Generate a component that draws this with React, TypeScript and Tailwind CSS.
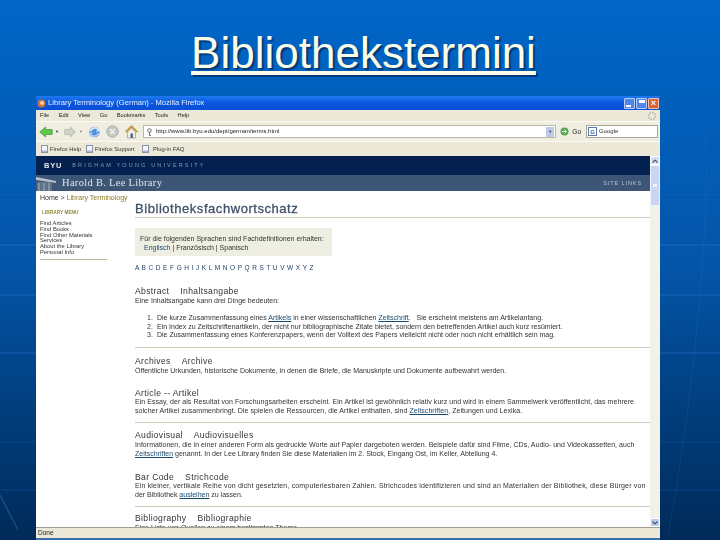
const Back = () => (
  <svg width="14" height="12" viewBox="0 0 17 14">
    <path d="M1 7 L8 1 V4 H16 V10 H8 V13 Z" fill="#5fc94a" stroke="#2f8f2a" strokeWidth="0.8" />
  </svg>
);
const Forward = () => (
  <svg width="12" height="12" viewBox="0 0 17 14" preserveAspectRatio="none">
    <path d="M16 7 L9 1 V4 H1 V10 H9 V13 Z" fill="#cfd2c8" stroke="#a8aba0" strokeWidth="0.8" />
  </svg>
);
const Reload = () => (
  <svg width="13" height="14" viewBox="0 0 15 15">
    <circle cx="7.5" cy="7.5" r="6" fill="#4f8fdc" />
    <path d="M2 6 A6 6 0 0 1 12 3.5 L13.5 2 V7 H9 L10.8 5 A4 4 0 0 0 4 7 Z" fill="#d7e8f8" />
    <path d="M13 9 A6 6 0 0 1 3 11.5 L1.5 13 V8 H6 L4.2 10 A4 4 0 0 0 11 8 Z" fill="#a9cdf0" />
  </svg>
);
const Stop = () => (
  <svg width="13" height="13" viewBox="0 0 14 14">
    <circle cx="7" cy="7" r="6.2" fill="#c4c6c0" stroke="#aeb0aa" />
    <path d="M4.5 4.5 L9.5 9.5 M9.5 4.5 L4.5 9.5" stroke="#eeeeea" strokeWidth="1.8" />
  </svg>
);
const HomeIcon = () => (
  <svg width="15" height="15" viewBox="0 0 15 15">
    <path d="M1 7.5 L7.5 1 L14 7.5 L12.5 8.5 L7.5 3.8 L2.5 8.5 Z" fill="#c7933c" />
    <path d="M3.5 8 L7.5 4.2 L11.5 8 V14 H3.5 Z" fill="#f3efe0" stroke="#8a8a80" strokeWidth="0.6" />
    <rect x="6.5" y="9.5" width="2.5" height="4.5" fill="#4d6b8f" />
  </svg>
);
const PageIcon = () => (
  <svg width="7" height="8" viewBox="0 0 7 8">
    <rect x="0.5" y="0.5" width="6" height="7" fill="#f4f6fa" stroke="#8c93a8" />
    <rect x="1" y="5.5" width="5" height="1.5" fill="#a9b6d4" />
  </svg>
);

function Term({ a, b, sep = "\u00a0\u00a0\u00a0\u00a0" }: { a: string; b: string; sep?: string }) {
  return (
    <div className="text-[8.6px] leading-[10px] tracking-[0.35px] text-[#333]">
      {a}
      {sep}
      {b}
    </div>
  );
}
const Rule = () => <div className="h-px bg-[#cfcdb8]" />;
const Lnk = ({ children }: { children: React.ReactNode }) => (
  <span className="underline text-[#1a4a6e]">{children}</span>
);

export default function App() {
  return (
    <div className="relative w-[720px] h-[540px] overflow-hidden bg-gradient-to-b from-[#0066c8] via-[#0455a8] to-[#002a58] font-['Liberation_Sans',Arial,sans-serif]">
      <svg className="absolute inset-0" width="720" height="540" viewBox="0 0 720 540">
        <g stroke="#2a78cc" strokeWidth="1.2" opacity="0.55">
          <path d="M0 195 H720" opacity="0.5" />
          <path d="M0 245 H720" />
          <path d="M0 295 H720" />
          <path d="M0 353 H720" />
          <path d="M0 442 H720" opacity="0.4" />
          <path d="M0 490 H720" opacity="0.5" />
        </g>
        <path d="M0 495 L18 530" stroke="#2a6aa8" strokeWidth="1.5" opacity="0.5" />
        <path d="M705 130 C 712 220 690 420 668 535" stroke="#3a82cf" strokeWidth="1" fill="none" opacity="0.18" />
      </svg>

      <div className="relative h-[96px] pt-[27px] pl-[7px] text-center">
        <span className="text-[44px] leading-[52px] text-[#fbfde8] underline decoration-[4px] underline-offset-[3px] [text-shadow:2px_2px_1px_#003a78]">
          Bibliothekstermini
        </span>
      </div>

      <div className="relative mx-[36px] w-[624px] h-[444px] flex flex-col overflow-hidden bg-white blur-[0.3px]">
        {/* title bar */}
        <div className="h-[14px] shrink-0 flex items-center bg-gradient-to-b from-[#1f7af0] via-[#0a56dc] to-[#0a4fd6] pl-[1px] pr-[1px]">
          <svg width="9" height="9" viewBox="0 0 8 8" className="mr-[2px]">
            <circle cx="4" cy="4" r="3.6" fill="#c8743a" />
            <circle cx="4.5" cy="3.6" r="1.8" fill="#e8d8b8" />
          </svg>
          <span className="text-[7.6px] leading-none text-[#e8f0ff] whitespace-nowrap">Library Terminology (German) - Mozilla Firefox</span>
          <div className="ml-auto flex gap-[1px]">
            <div className="w-[11px] h-[11px] rounded-[1px] bg-[#4f86ea] border border-[#b8d0f8] flex items-end pl-[1px] pb-[1px]">
              <div className="w-[5px] h-[2px] bg-white" />
            </div>
            <div className="w-[11px] h-[11px] rounded-[1px] bg-[#4f86ea] border border-[#b8d0f8] flex justify-center pt-[1px]">
              <div className="w-[6px] h-[3px] bg-white" />
            </div>
            <div className="w-[11px] h-[11px] rounded-[1px] bg-[#d8623c] border border-[#f0c0a8] flex items-center justify-center text-[9px] font-bold leading-none text-white">
              ×
            </div>
          </div>
        </div>
        {/* menu */}
        <div className="h-[12px] shrink-0 flex items-center gap-[9.5px] pl-[4px] pr-[3px] bg-[#ece9d8] border-b border-[#fbfaf3] text-[5.7px] text-[#222]">
          <span>File</span>
          <span>Edit</span>
          <span>View</span>
          <span>Go</span>
          <span>Bookmarks</span>
          <span>Tools</span>
          <span>Help</span>
          <svg className="ml-auto" width="10" height="10" viewBox="0 0 10 10">
            <circle cx="5" cy="5" r="3.4" fill="none" stroke="#b8b6a8" strokeWidth="1.6" strokeDasharray="1.6 1" />
          </svg>
        </div>
        {/* nav */}
        <div className="h-[20px] shrink-0 flex items-center pl-[3px] pr-[2px] bg-[#f0eee0] border-b border-[#fbfaf3]">
          <Back />
          <span className="text-[4px] ml-[2px] w-[9px] text-[#333]">▼</span>
          <Forward />
          <span className="text-[4px] ml-[3px] w-[9px] text-[#888]">▼</span>
          <Reload />
          <span className="w-[5px]" />
          <Stop />
          <span className="w-[5px]" />
          <HomeIcon />
          <span className="w-[4px]" />
          <div className="flex-1 h-[13px] bg-white border border-[#b8b8a8] flex items-center pr-[1px] min-w-0">
            <svg className="ml-[3px] shrink-0" width="5" height="8" viewBox="0 0 5 8">
              <circle cx="2.5" cy="2.5" r="1.8" fill="none" stroke="#667" />
              <path d="M2.5 4 V7.5 H4" stroke="#667" fill="none" />
            </svg>
            <span className="pl-[4px] text-[6px] text-[#222] whitespace-nowrap">http://www.lib.byu.edu/dept/german/terms.html</span>
            <div className="ml-auto w-[8px] h-[10px] bg-[#bccbe8] flex items-center justify-center text-[4px] text-[#335]">▼</div>
          </div>
          <svg className="ml-[4px]" width="9" height="9" viewBox="0 0 9 9">
            <circle cx="4.5" cy="4.5" r="4" fill="#58a858" />
            <path d="M2 4.5 H6 M4.5 2.8 L6.5 4.5 L4.5 6.2" stroke="#d8f0d8" fill="none" />
          </svg>
          <span className="ml-[3px] text-[6.5px] text-[#222]">Go</span>
          <div className="ml-[5px] w-[72px] h-[13px] bg-white border border-[#a8a898] flex items-center pl-[1px]">
            <div className="w-[9px] h-[9px] border border-[#5a7aa8] text-[6px] leading-[8px] text-center text-[#355a90] font-bold mr-[2px]">G</div>
            <span className="text-[6px] text-[#333] whitespace-nowrap">Google</span>
          </div>
        </div>
        {/* bookmarks */}
        <div className="h-[14px] shrink-0 flex items-center pl-[5px] bg-[#ece9d8] text-[5.8px] text-[#333] whitespace-nowrap">
          <span className="flex items-center gap-[2px] w-[45px]"><PageIcon />Firefox Help</span>
          <span className="flex items-center gap-[2px] w-[56px]"><PageIcon />Firefox Support</span>
          <span className="flex items-center gap-[4px]"><PageIcon />Plug-in FAQ</span>
        </div>

        <div className="flex-1 flex min-h-0">
          <div className="flex-1 min-w-0 flex flex-col">
            {/* BYU bar */}
            <div className="h-[19px] shrink-0 bg-[#03204f] flex items-center pl-[8px] gap-[10px]">
              <span className="text-[7.5px] font-bold tracking-[0.8px] text-[#dfe5ef]">BYU</span>
              <span className="text-[5.5px] tracking-[2.15px] text-[#8a98b0]">BRIGHAM YOUNG UNIVERSITY</span>
            </div>
            {/* Library bar */}
            <div className="h-[16px] shrink-0 bg-[#3d5675] flex items-center">
              <svg width="20" height="16" viewBox="0 0 20 16">
                <path d="M0 2 L20 6 V8 L0 5 Z" fill="#b8bfc8" />
                <rect x="1" y="7" width="15" height="9" fill="#5f7388" />
                <path d="M3 8 V16 M8 8 V16 M13 8 V16" stroke="#a8b2bc" />
              </svg>
              <span className="ml-[6px] font-['Liberation_Serif',serif] text-[10.5px] tracking-[0.3px] text-[#e0e6ee]">Harold B. Lee Library</span>
              <span className="ml-auto mr-[8px] text-[5.5px] tracking-[0.9px] text-[#b8c4d4]">SITE LINKS</span>
            </div>
            {/* page */}
            <div className="relative flex-1 min-h-0 flex bg-white overflow-hidden">
              <div className="w-[99px] shrink-0 pl-[4px]">
                <div className="pt-[2px] text-[7px] leading-[9px] whitespace-nowrap text-[#333]">
                  Home &gt; <span className="text-[#8a7a20]">Library Terminology</span>
                </div>
                <div className="mt-[7px] pl-[2px] text-[4.8px] leading-[7px] font-bold text-[#8d8a3a]">LIBRARY MENU</div>
                <div className="mt-[5px] text-[5.8px] leading-[5.8px] text-[#333] whitespace-nowrap">
                  <div>Find Articles</div>
                  <div>Find Books</div>
                  <div>Find Other Materials</div>
                  <div>Services</div>
                  <div>About the Library</div>
                  <div>Personal Info</div>
                </div>
                <div className="mt-[3px] mr-[28px] h-px bg-[#b9b79c]" />
              </div>

              <div className="flex-1 min-w-0">
                <div className="pt-[10px] pb-[1px] text-[13px] leading-[15px] tracking-[0.55px] text-[#3f5168] [-webkit-text-stroke:0.3px_#3f5168]">
                  Bibliotheksfachwortschatz
                </div>
                <Rule />
                <div className="mt-[10px] w-[197px] h-[28px] bg-[#eeeee3] pl-[5px] pt-[6px] text-[7px] leading-[9px] text-[#333] whitespace-nowrap">
                  <div>Für die folgenden Sprachen sind Fachdefinitionen erhalten:</div>
                  <div className="pl-[4px]"><span className="text-[#1a4a6e]">Englisch</span> | Französisch | Spanisch</div>
                </div>
                <div className="mt-[8px] text-[6.5px] leading-[8px] tracking-[0.4px] text-[#1f3f66] whitespace-nowrap">A B C D E F G H I J K L M N O P Q R S T U V W X Y Z</div>

                <div className="mt-[14px]">
                  <Term a="Abstract" b="Inhaltsangabe" />
                  <div className="text-[7px] leading-[9px] text-[#333] whitespace-nowrap">Eine Inhaltsangabe kann drei Dinge bedeuten:</div>
                  <div className="mt-[9px] text-[7px] leading-[8.7px] text-[#333] whitespace-nowrap">
                    <div className="flex"><span className="w-[22px] pl-[12px]">1.</span><span>Die kurze Zusammenfassung eines <Lnk>Artikels</Lnk> in einer wissenschaftlichen <Lnk>Zeitschrift</Lnk>.{"\u00a0\u00a0\u00a0"}Sie erscheint meistens am Artikelanfang.</span></div>
                    <div className="flex"><span className="w-[22px] pl-[12px]">2.</span><span>Ein Index zu Zeitschriftenartikeln, der nicht nur bibliographische Zitate bietet, sondern den betreffenden Artikel auch kurz resümiert.</span></div>
                    <div className="flex"><span className="w-[22px] pl-[12px]">3.</span><span>Die Zusammenfassung eines Konferenzpapers, wenn der Volltext des Papers vielleicht nicht oder noch nicht erhältlich sein mag.</span></div>
                  </div>
                </div>
                <div className="mt-[7px]"><Rule /></div>

                <div className="mt-[8px]">
                  <Term a="Archives" b="Archive" />
                  <div className="text-[7px] leading-[9px] text-[#333] whitespace-nowrap">Öffentliche Urkunden, historische Dokumente, in denen die Briefe, die Manuskripte und Dokumente aufbewahrt werden.</div>
                </div>

                <div className="mt-[13px]">
                  <Term a="Article" b="Artikel" sep=" -- " />
                  <div className="-mt-[1px] text-[7px] leading-[9px] tracking-[0.05px] text-[#333] whitespace-nowrap">Ein Essay, der als Resultat von Forschungsarbeiten erscheint. Ein Artikel ist gewöhnlich relativ kurz und wird in einem Sammelwerk veröffentlicht, das mehrere</div>
                  <div className="text-[7px] leading-[9px] tracking-[0.05px] text-[#333] whitespace-nowrap">solcher Artikel zusammenbringt. Die spielen die Ressourcen, die Artikel enthalten, sind <Lnk>Zeitschriften</Lnk>, Zeitungen und Lexika.</div>
                </div>
                <div className="mt-[7px]"><Rule /></div>

                <div className="mt-[7px]">
                  <Term a="Audiovisual" b="Audiovisuelles" />
                  <div className="mt-[1px] text-[7px] leading-[8.5px] tracking-[0.03px] text-[#333] whitespace-nowrap">Informationen, die in einer anderen Form als gedruckte Worte auf Papier dargeboten werden. Beispiele dafür sind Filme, CDs, Audio- und Videokassetten, auch</div>
                  <div className="text-[7px] leading-[8.5px] text-[#333] whitespace-nowrap"><Lnk>Zeitschriften</Lnk> genannt. In der Lee Library finden Sie diese Materialien im 2. Stock, Eingang Ost, im Keller, Abteilung 4.</div>
                </div>

                <div className="mt-[14px]">
                  <Term a="Bar Code" b="Strichcode" />
                  <div className="-mt-[1px] text-[7px] leading-[9px] tracking-[0.16px] text-[#333] whitespace-nowrap">Ein kleiner, vertikale Reihe von dicht gesetzten, computerlesbaren Zahlen. Strichcodes identifizieren und sind an Materialien der Bibliothek, diese Bürger von</div>
                  <div className="text-[7px] leading-[9px] text-[#333] whitespace-nowrap">der Bibliothek <Lnk>ausleihen</Lnk> zu lassen.</div>
                </div>
                <div className="mt-[7px]"><Rule /></div>

                <div className="mt-[6px]">
                  <Term a="Bibliography" b="Bibliographie" />
                  <div className="text-[7px] leading-[9px] text-[#333] whitespace-nowrap">Eine Liste von Quellen zu einem bestimmten Thema.</div>
                </div>
              </div>
            </div>
          </div>
          {/* scrollbar */}
          <div className="w-[10px] shrink-0 bg-[#f2f1ea] flex flex-col">
            <div className="h-[9px] bg-[#d6e0f6] border border-white flex items-center justify-center">
              <svg width="6" height="4" viewBox="0 0 6 4"><path d="M0.5 3.5 L3 1 L5.5 3.5" stroke="#45587a" strokeWidth="1.2" fill="none" /></svg>
            </div>
            <div className="h-[41px] bg-[#c9d5f2] border border-[#eef2fb] flex items-center justify-center">
              <div className="w-[4px] h-[3px] bg-[#eef2fb]" />
            </div>
            <div className="flex-1" />
            <div className="h-[9px] bg-[#bccbe8] border border-white flex items-center justify-center">
              <svg width="6" height="4" viewBox="0 0 6 4"><path d="M0.5 0.5 L3 3 L5.5 0.5" stroke="#45587a" strokeWidth="1.2" fill="none" /></svg>
            </div>
          </div>
        </div>

        {/* status */}
        <div className="h-[11px] shrink-0 bg-[#ece9d8] border-t border-[#a09e90] flex items-center pl-[2px] text-[6.5px] text-[#222]">Done</div>
        <div className="h-[2px] shrink-0 bg-[#3a6ea8]" />
      </div>
    </div>
  );
}
